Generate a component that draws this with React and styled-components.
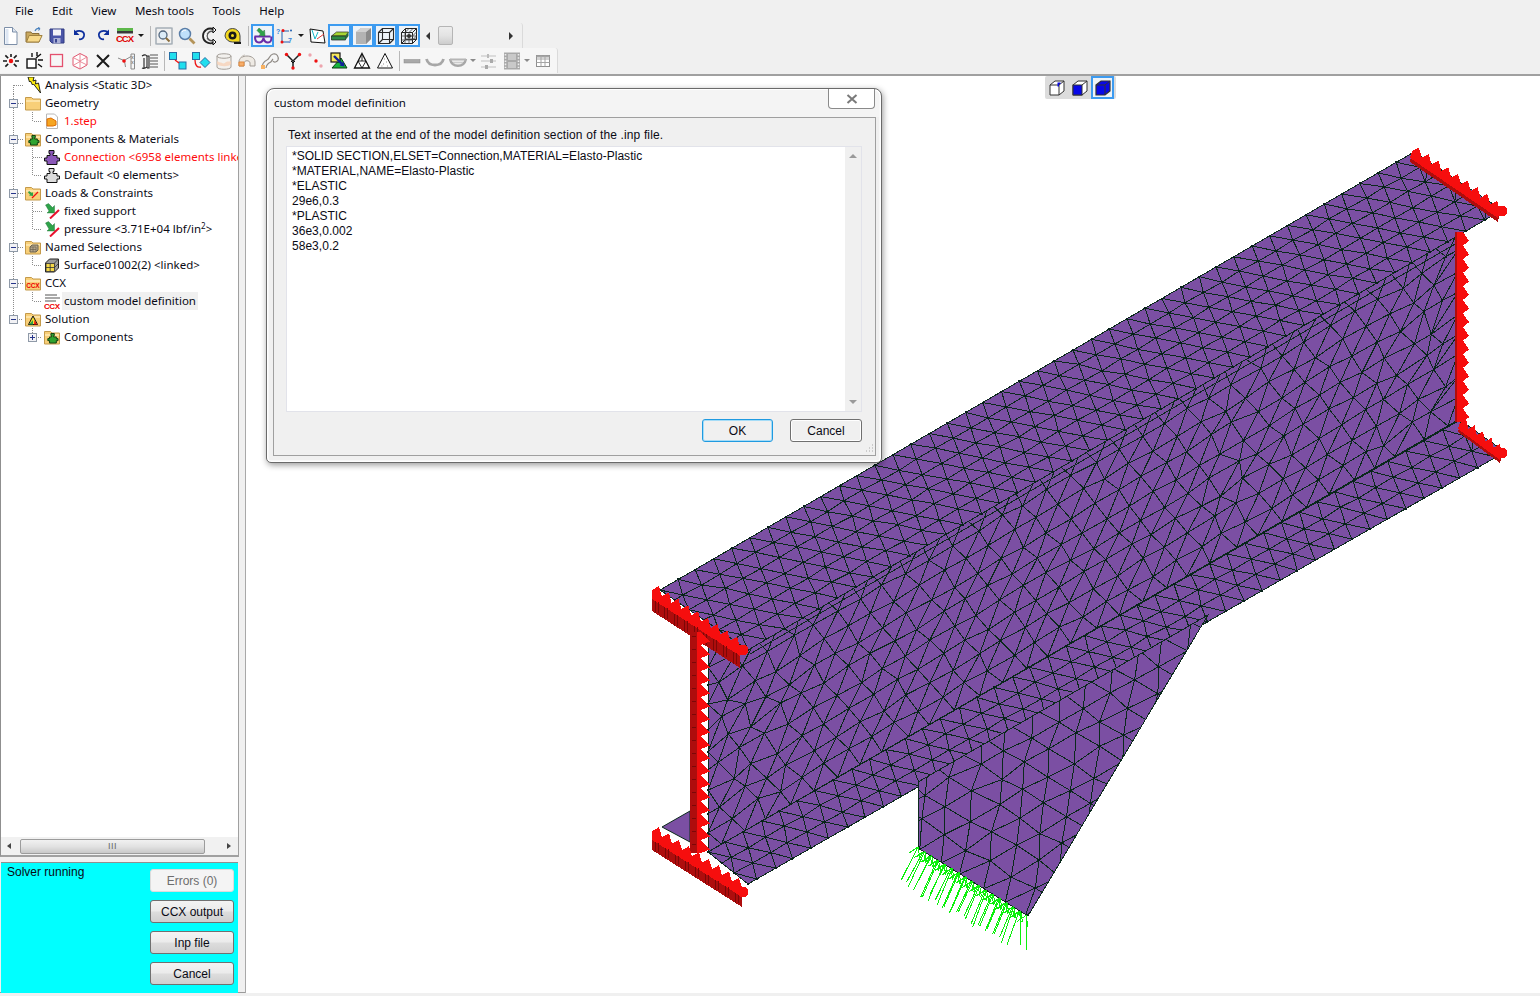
import React, { useMemo } from "react";
import styled, { createGlobalStyle } from "styled-components";

const Global = createGlobalStyle`
  html, body { margin: 0; padding: 0; background: #f0f0f0; overflow: hidden; }
  #root { height: 996px; }
`;
const UI = `"Noto Sans", "Open Sans", sans-serif`;
const ARIAL = `"Liberation Sans", Arial, sans-serif`;

/* ---------- layout ---------- */
const Page = styled.div`
  width: 1540px; height: 996px; display: flex; flex-direction: column;
  background: #f0f0f0; overflow: hidden; font-family: ${UI}; color: #000;
`;
const MenuBar = styled.nav`
  height: 23px; flex: none; display: flex; align-items: center; gap: 18.6px;
  padding: 0 0 3px 15px; box-sizing: border-box; font-size: 11.5px;
`;
const MenuItem = styled.span`color: #0a0a14;`;
const ToolRow = styled.div`
  height: ${p => p.$h || 25}px; flex: none; display: flex; align-items: flex-start;
`;
const ToolStrip = styled.div`
  display: flex; align-items: center; height: 25px; margin-left: -1px;
  width: ${p => p.$width}px; flex: none; box-sizing: border-box;
  background: ${p => p.$bg};
  border-right: 1px solid #dadada;
  border-top-right-radius: 3px;
`;
const ToolButton = styled.div`
  width: 23px; height: 23px; flex: none; display: flex; align-items: center; justify-content: center;
  box-sizing: border-box;
  border: ${p => (p.$on ? "2px solid #3d9bf0" : "none")};
  background: ${p => (p.$on ? "#eef3f8" : "transparent")};
`;
const Sep = styled.div`
  width: 1px; height: 20px; flex: none; background: #b8b8b8;
  margin-left: ${p => p.$l}px; margin-right: ${p => p.$r}px;
`;
const Caret = styled.div`
  width: 8px; flex: none; display: flex; justify-content: center;
  &::after {
    content: ""; border-left: 3px solid transparent; border-right: 3px solid transparent;
    border-top: 3px solid ${p => (p.$dim ? "#8a8a8a" : "#1a1a1a")};
  }
`;
const Scroller = styled.div`
  display: flex; align-items: center; width: 101px; height: 23px; flex: none; position: relative;
`;
const ArrowL = styled.div`
  width: 0; height: 0; margin-left: 6px; flex: none;
  border-top: 4px solid transparent; border-bottom: 4px solid transparent; border-right: 4px solid #333;
`;
const ArrowR = styled.div`
  width: 0; height: 0; margin-left: auto; margin-right: 8px; flex: none;
  border-top: 4px solid transparent; border-bottom: 4px solid transparent; border-left: 4px solid #333;
`;
const Thumb = styled.div`
  width: 15px; height: 19px; margin-left: 8px; flex: none; box-sizing: border-box;
  border: 1px solid #b5b5b5; border-radius: 2px;
  background: linear-gradient(#ededed, #e3e3e3 50%, #cdcdcd);
`;
const Main = styled.div`
  flex: 1; display: flex; border-top: 2px solid #a0a0a0; min-height: 0;
  border-bottom: 3px solid #f0f0f0; box-shadow: inset 0 -1px 0 #9a9a9a;
`;
const LeftPane = styled.aside`
  width: 239px; flex: none; display: flex; flex-direction: column;
`;
const TreeFrame = styled.div`
  height: 781px; flex: none; display: flex; flex-direction: column; box-sizing: border-box;
  border-left: 1.5px solid #8f8f8f; border-right: 1px solid #a0a0a0; border-bottom: 2px solid #a0a0a0;
`;
const Tree = styled.div`
  flex: 1; background: #fff; overflow: hidden; padding: 0 0 0 3px; min-height: 0;
`;
const Row = styled.div`
  height: 18px; display: flex; align-items: center; white-space: nowrap;
`;
const Guide = styled.svg`width: 19px; height: 18px; flex: none; display: block;`;
const RowIcon = styled.svg`width: 16px; height: 16px; flex: none; margin: 0 2px; display: block;`;
const Label = styled.span`
  font-size: 11.5px; line-height: 17px; padding: 0 2px 1px; flex: none;
  color: ${p => (p.$red ? "#fe0a0a" : "#0a0a14")};
  background: ${p => (p.$sel ? "#f0f0f0" : "transparent")};
`;
const HScroll = styled.div`
  height: 18px; flex: none; background: #f1f1f1; display: flex; align-items: center;
`;
const HThumb = styled.div`
  width: 185px; height: 15px; margin-left: 9px; box-sizing: border-box;
  border: 1px solid #9c9c9c; border-radius: 2px; display: flex; align-items: center; justify-content: center;
  background: linear-gradient(#f1f1f1, #e2e2e2 50%, #c8c8c8);
  color: #666; font: 9px ${ARIAL}; letter-spacing: .5px;
`;
const HArrowL = styled(ArrowL)`
  margin-left: 6px; border-top-width: 3.5px; border-bottom-width: 3.5px; border-right-color: #444;
`;
const HArrowR = styled(ArrowR)`
  margin-right: 7px; border-top-width: 3.5px; border-bottom-width: 3.5px; border-left-color: #444;
`;
const Status = styled.div`
  margin: 5px 1px 0 1px; flex: 1; background: #00ffff; box-sizing: border-box;
  border-top: 1px solid #8f8f8f; position: relative;
  display: flex; justify-content: space-between; padding: 3px 4px 0 6px; font: 12px ${ARIAL};
`;
const StatusText = styled.span`color: #0a0a14; line-height: 14px; margin-top: -1px;`;
const StatusButtons = styled.div`
  display: flex; flex-direction: column; gap: 8px; padding-top: 3px;
`;
const WinButton = styled.div`
  width: ${p => p.$w}px; height: 23px; box-sizing: border-box; display: flex; align-items: center; justify-content: center;
  font: 12px ${ARIAL}; border-radius: 3px;
  color: ${p => (p.$off ? "#6d6d6d" : "#0a0a14")};
  border: 1px solid ${p => (p.$off ? "#dcdcdc" : p.$def ? "#1f9ae0" : "#707070")};
  background: ${p => (p.$off ? "#f4f4f4" : "linear-gradient(#f3f3f3, #ebebeb 48%, #dddddd 52%, #cfcfcf)")};
  ${p => p.$flat && `background: #f0f0f0; box-shadow: inset 0 0 0 1px ${p.$def ? "#a5dcf7" : "#fff"};`}
`;
const Canvas = styled.main`
  flex: 1; position: relative; background: #fff; border-left: 1.5px solid #a8a8a8; margin-left: 6px;
  min-width: 0;
`;
const Viewport = styled.svg`display: block; width: 100%; height: 100%;`;
const CubeBar = styled.div`
  position: absolute; left: 799px; top: 0; height: 23px; width: 71px; display: flex;
  align-items: center; background: #dcdcdc; border-radius: 2px;
`;
const Dialog = styled.section`
  position: absolute; left: 20px; top: 12px; width: 616px; height: 375px; box-sizing: border-box;
  background: #f0f0f0; border: 1.5px solid #6a6a6a; border-radius: 8px 8px 5px 5px;
  box-shadow: 0 0 0 1.5px #fff inset, 1px 2px 6px rgba(0,0,0,.4);
  display: flex; flex-direction: column; padding: 0 5px 6px 6px;
`;
const Title = styled.header`
  height: 27px; flex: none; display: flex; align-items: center; justify-content: space-between;
  background: #f4f4f4; margin: 1px -3px 0 -4px; padding: 0 0 0 4px; border-top-left-radius: 6px; border-top-right-radius: 6px;
`;
const TitleText = styled.h1`
  margin: -2px 0 0 1px; font: 400 11.5px ${UI}; color: #0a0a14;
`;
const CloseBtn = styled.div`
  width: 47px; height: 20px; align-self: flex-start; margin-right: 4px; box-sizing: border-box; background: #fff;
  border: 1px solid #8a8a8a; border-top: none; border-radius: 0 0 4px 4px; margin-top: -1px;
  display: flex; align-items: center; justify-content: center;
`;
const Body = styled.div`
  flex: 1; border: 1px solid #9f9f9f; background: #f0f0f0; padding: 9px 13px 0 12px; display: flex; flex-direction: column; position: relative;
`;
const Prompt = styled.p`margin: 1px 0 -1px 2px; font: 12px/15px ${ARIAL}; color: #0a0a14; letter-spacing: .14px;`;
const TextArea = styled.div`
  margin-top: 4px; height: 266px; background: #fff; border: 1px solid #e2e3ea; display: flex; box-sizing: border-box;
`;
const Code = styled.pre`
  flex: 1; margin: 0; padding: 2px 5px; font: 12px/15px ${ARIAL}; color: #0a0a14; letter-spacing: .03px;
`;
const VScroll = styled.div`
  width: 16px; flex: none; background: #f0f0f0; display: flex; flex-direction: column; justify-content: space-between; align-items: center; padding: 7px 0;
`;
const UpMark = styled.div`
  border-left: 4px solid transparent; border-right: 4px solid transparent; border-bottom: 4px solid #9a9a9a;
`;
const DownMark = styled.div`
  border-left: 4px solid transparent; border-right: 4px solid transparent; border-top: 4px solid #9a9a9a;
`;
const DialogButtons = styled.div`
  display: flex; justify-content: flex-end; gap: 17px; margin-top: 7px;
`;
const Grip = styled.svg`position: absolute; right: 1px; bottom: 1px; width: 10px; height: 10px;`;

/* ---------- toolbar icons ---------- */
const Ico = styled.svg`width: 20px; height: 20px; display: block; flex: none;`;
const icons = {
  new: <><path d="M3.500 1.500h8l4.500 4.500v12.500H3.500z" fill="#fff" stroke="#7d8fa8"/><path d="M11.500 1.500v4.500H16" fill="#dfe7f2" stroke="#7d8fa8"/><path d="M4.500 3v15h3V3z" fill="#dde6f3"/></>,
  open: <><path d="M2 6h5l1 1.500h7V16H2z" fill="#c9a85e" stroke="#8b6f38"/><path d="M2.500 16l2.600-6.500h13L15 16z" fill="#f7d98a" stroke="#a0813f"/><path d="M11 5c1-2.400 3-3 5-2.500M16 2.500l-2-1M16 2.500l-1.500 2" fill="none" stroke="#4b82bd" strokeWidth="1.200"/></>,
  save: <><path d="M3 3h14v14H5l-2-2z" fill="#4a55a8" stroke="#2f3a80"/><rect x="6" y="3.500" width="8" height="6" fill="#f2f2f7"/><rect x="6.500" y="12" width="7" height="5" fill="#aab0d6"/><rect x="8" y="13" width="2" height="3.500" fill="#3a4590"/></>,
  undo: <><path d="M5 6c5-2.500 10-.5 9 4-.6 2.600-3 3.600-5 3.200" fill="none" stroke="#0d2f9e" strokeWidth="1.700"/><path d="M4 3.500v5.500h5.500z" fill="#0d2f9e"/></>,
  redo: <><path d="M15 6c-5-2.500-10-.5-9 4 .6 2.600 3 3.600 5 3.200" fill="none" stroke="#0d2f9e" strokeWidth="1.700"/><path d="M16 3.500v5.500h-5.500z" fill="#0d2f9e"/></>,
  ccx: <><rect x="1" y="2" width="16" height="3" fill="#5db84a"/><rect x="1" y="5" width="16" height="2.500" fill="#3a3a3a"/><text x="0" y="16" fontFamily={ARIAL} fontWeight="700" fontSize="9.500" fill="#e00000" textLength="18">CCX</text></>,
  zoombox: <><path d="M2 1.500v17M2.500 2h15M18 1.500v17M2.500 18h15" stroke="#7f8c99" fill="none"/><circle cx="9" cy="9" r="4" fill="#dcecf8" stroke="#51667e" strokeWidth="1.300"/><path d="M12 12l3.500 3.500" stroke="#8a6d3b" strokeWidth="2"/></>,
  zoom: <><circle cx="8" cy="8" r="5.500" fill="#bfe0fa" stroke="#5a7ea8" strokeWidth="1.500"/><path d="M5 6c1-1.500 2.500-2 4-1.800" stroke="#fff" fill="none"/><path d="M12.500 12.500l5 5" stroke="#b4945a" strokeWidth="2.800"/></>,
  rotate: <><path d="M14 3.500C8 .5 3 5 3 10c0 5 5 9 11 6.500" fill="none" stroke="#222" strokeWidth="1.800"/><path d="M14 6C10 4 7 7 7 10s3 6 7 4" fill="none" stroke="#555" strokeWidth="1.500"/><path d="M5 8l2 .5M5 12l2-.5M4 10h3" stroke="#fff" strokeWidth=".8"/><path d="M13 1l3 3-3 3zM13 13l3 3-3 3z" fill="#fff" stroke="#111"/></>,
  tape: <><path d="M2 10a7.500 7.500 0 1 1 15 0v6H9.500A7.500 7.500 0 0 1 2 10z" fill="#f4d91f" stroke="#444"/><circle cx="9.500" cy="9.500" r="4" fill="#1a1a1a"/><circle cx="9.500" cy="9.500" r="1.500" fill="#f4d91f"/><path d="M11 16h7v2h-7z" fill="#1a1a1a"/></>,
  glasses: <><path d="M1.500 10.500h16M2 10.500c0 4 1 6 4 6s4-2 4.500-4.500c.5 2.500 1.500 4.500 4.500 4.500s3.500-2 3.500-6" fill="none" stroke="#6a2da8" strokeWidth="2"/><path d="M6 2l4 3.500 1.500-1.500.5 6-6-.5 1.500-1.500L4 4.500z" fill="#2ea34a" stroke="#2a6e3b" strokeWidth=".5"/></>,
  pick: <><text x="0" y="8" fontFamily={ARIAL} fontWeight="700" fontSize="7" fill="#2f7ed8">?</text><text x="12" y="17" fontFamily={ARIAL} fontWeight="700" fontSize="7" fill="#2f7ed8">7</text><path d="M7 5h6M6 5v11M7 16h6" fill="none" stroke="#1f5fb0"/><circle cx="7" cy="4.500" r="1.500" fill="#e11"/><circle cx="6" cy="16" r="1.500" fill="#e11"/><circle cx="15" cy="4.500" r="1" fill="#1f5fb0"/></>,
  poly: <><path d="M3 3l13 2 2 12-14-1z" fill="#fff" stroke="#111"/><path d="M5 4l3 9 3-7" fill="none" stroke="#19b8c9"/><path d="M10 13l7-5" fill="none" stroke="#e03a3a"/></>,
  slab: <><path d="M1.500 10l5-4h12l-3 4z" fill="#a7d633" stroke="#2a2a2a" strokeWidth=".7"/><path d="M1.500 10h14v4h-14z" fill="#2e8b46" stroke="#1a1a1a" strokeWidth=".7"/><path d="M15.500 10l3-4v4l-3 4z" fill="#2a6b38"/></>,
  solid: <><path d="M3 6l5-4h10v11l-5 5H3z" fill="#b3b3b3"/><path d="M13 6l5-4v11l-5 5z" fill="#8b8b8b"/><path d="M3 6l5-4h10l-5 4z" fill="#d0d0d0"/></>,
  wire: <><path d="M2.500 6.500h11v11h-11zM6.500 2.500h11v11h-11zM2.500 6.500l4-4M13.500 6.500l4-4M13.500 17.500l4-4M2.500 17.500l4-4" fill="none" stroke="#2b2b2b" strokeWidth="1.100"/></>,
  mesh: <><path d="M2.500 6.500h11v11h-11zM6.500 2.500h11v11h-11zM2.500 6.500l4-4M13.500 6.500l4-4M13.500 17.500l4-4M2.500 17.500l4-4" fill="none" stroke="#222"/><path d="M2.500 10h11M2.500 14h11M6 6.500v11M10 6.500v11M13.500 10l4-4M13.500 14l4-4M6 6.500l4-4M10 6.500l4-4M6 10h11M6 13h11" fill="none" stroke="#444" strokeWidth=".8"/><circle cx="10" cy="10" r="2" fill="#333"/></>,
  burst: <><path d="M10 10L3 3M10 10L17 3M10 10L3 17M10 10L17 17M10 10H2M10 10H18M10 10V3" stroke="#1a1a1a" strokeWidth="1.600" strokeDasharray="4 3" strokeDashoffset="-4"/><circle cx="10" cy="10" r="2.200" fill="#e11"/></>,
  boxburst: <><rect x="3" y="8" width="9" height="9" fill="#fff" stroke="#111" strokeWidth="1.400"/><path d="M12 7l5-4M14 9h5M13 5V1M8 6V2M14 13l4 3" stroke="#111" strokeWidth="1.400"/></>,
  redrect: <rect x="3.500" y="3.500" width="12" height="12" fill="none" stroke="#e4506e" strokeWidth="1.300"/>,
  redcube: <><path d="M3 6.500l7-4 7 3.500v8l-7 4-7-3.500z" fill="#fff" stroke="#e0566f"/><path d="M3 6.500l7 3.500 7-4M10 10v7.500M3 14.500l7-4 7 3.500M10 2.500v8" fill="none" stroke="#e8808f" strokeWidth=".9"/></>,
  cross: <path d="M4 4l12 12M16 4L4 16" stroke="#1b1b1b" strokeWidth="2"/>,
  node: <><path d="M2 7l6 2.500 7-4M8.500 10l1 6M15 3v15M18.500 3v15M15 3h3.500M15 18h3.500" fill="none" stroke="#8a8a8a"/><circle cx="8" cy="10" r="1.800" fill="#e11"/><text x="15.200" y="8" fontSize="5" fill="#555" fontFamily={ARIAL}>x</text><text x="15.200" y="13" fontSize="5" fill="#555" fontFamily={ARIAL}>x</text></>,
  hatch: <><path d="M3 5c3-2 5-1 5 1v10c-2 1.500-4 1.500-5 1M5 7v10M8 5h2v12H8" fill="none" stroke="#222" strokeWidth="1.100"/><path d="M11 4h8M11 7h8M11 10h8M11 13h8M11 16h8" stroke="#555"/></>,
  seg: <><rect x="1.500" y="1.500" width="7" height="7" fill="#20dfee" stroke="#256fa5"/><rect x="11" y="11" width="7" height="7" fill="#20dfee" stroke="#256fa5"/><path d="M7 9l4 3" stroke="#e11" strokeWidth="1.300"/></>,
  seg2: <><rect x="1.500" y="1.500" width="7" height="7" fill="#20dfee" stroke="#256fa5"/><path d="M14 6.500l5 5-5 5-5-5z" fill="#20dfee" stroke="#256fa5"/><path d="M4 9c0 5 2 8 6 7" fill="none" stroke="#e11" strokeWidth="1.300"/></>,
  cyl: <><path d="M3 5c0-3 14-3 14 0v11c0 3-14 3-14 0z" fill="#f3f1ee" stroke="#a5a09a"/><path d="M3 5c0 3 14 3 14 0" fill="none" stroke="#a5a09a"/><path d="M3 10c3 2 4 1 5 2 2 1 3 0 4-1 2-1 3 0 5-1v3c-2 3-11 3-14 0z" fill="#f6d2b8" opacity=".8"/></>,
  arch: <><path d="M2 15V11c0-8 16-8 16 0v4h-5v-3c0-3-6-3-6 0v3z" fill="#eeeae4" stroke="#a09a94"/><path d="M2 11h5v4H2z" fill="#f6ae6c" stroke="#e08a3e"/><path d="M3 8c1-3 4-4 5-4" fill="none" stroke="#c8c2ba"/></>,
  scurve: <><path d="M2 17c0-5 3-7 5-8 3-1 2-5 6-6 4-1 6 3 5 6-1 2-4 3-5 1M6 17c0-3 2-4 3-5 3-1 3-3 4-4" fill="none" stroke="#8f8a85" strokeWidth="1.200"/><rect x="1" y="14" width="4" height="4" fill="#f9b262"/></>,
  ytree: <><path d="M3 3l7 7M17 3l-7 7M10 10v7" stroke="#222" strokeWidth="1.500"/><path d="M10 12l-2-2M10 12l2-2" stroke="#111"/><circle cx="3.500" cy="3.500" r="1.700" fill="#e11"/><circle cx="16.500" cy="3.500" r="1.700" fill="#e11"/><circle cx="10" cy="17" r="1.700" fill="#e11"/></>,
  dots: <><circle cx="4" cy="4" r="1.700" fill="#eda5ae"/><circle cx="10" cy="10" r="1.700" fill="#e11"/><circle cx="15" cy="15" r="1.700" fill="#eda5ae"/></>,
  mapto: <><path d="M3 17l9-10 6 10z" fill="#16b43c" stroke="#0b3b12"/><rect x="2" y="2" width="9" height="9" fill="#f6e75a" stroke="#111" strokeWidth="1.200"/><path d="M5 5l9 9" stroke="#12209a" strokeWidth="2.400"/><path d="M15.500 15.500l-5-1 4-4z" fill="#12209a"/></>,
  tri: <><path d="M10 2.500L17.500 17h-15z" fill="#fff" stroke="#111" strokeWidth="1.300"/><path d="M6 10h8M10 3v7M6 10l4 7 4-7" fill="none" stroke="#111" strokeWidth=".9"/></>,
  tridot: <><path d="M10 2.500L17.500 17h-15z" fill="#fff" stroke="#111"/><path d="M9 8h.8M11 11h.8M8 13h.8M12 15h.8M6.500 15h.8" stroke="#777"/></>,
  bar: <rect x="2" y="8.500" width="16" height="3.500" fill="#a9a9a9" stroke="#8a8a8a" strokeWidth=".5"/>,
  bowl: <path d="M1.500 8c2 8 15 8 17 0" fill="none" stroke="#a7a7a7" strokeWidth="2.800"/>,
  bowl2: <><path d="M2 8c2 9 14 9 16 0" fill="none" stroke="#a7a7a7" strokeWidth="2.400"/><path d="M2 7.500h16v2H2z" fill="#b5b5b5"/><path d="M5 11.500h10" stroke="#ccc" strokeWidth="1.600"/></>,
  sliders: <><path d="M2 5h15M2 10h15M2 16h15" stroke="#c0c0c0"/><rect x="8" y="3" width="2" height="4" fill="#bbb"/><rect x="11" y="8" width="3" height="4" fill="#aaa"/><rect x="6" y="14" width="3" height="4" fill="#aaa"/></>,
  film: <><rect x="2" y="1.500" width="16" height="17" fill="#a9a9a9"/><rect x="6" y="3" width="8" height="6" fill="#c9c9c9"/><rect x="6" y="11" width="8" height="6" fill="#c9c9c9"/><path d="M3.500 3v14M16.500 3v14" stroke="#eee" strokeWidth="1.600" strokeDasharray="1.600 1.600"/></>,
  table: <><rect x="3.500" y="4.500" width="13" height="11" fill="#fff" stroke="#8f8f8f"/><path d="M3.500 8h13M3.500 11.500h13M8 4.500v11M12 4.500v11" stroke="#a5a5a5"/><rect x="3.500" y="4.500" width="13" height="2" fill="#a5a5a5"/></>,
};
const cubeIcons = {
  a: <><path d="M3 7l5-4h9v10l-5 4H3z" fill="#fff" stroke="#333"/><path d="M3 7h9v10M12 7l5-4" fill="none" stroke="#333"/><path d="M10.500 4.500h3v1.500h-1.500v2.500h-1.500z" fill="#0a0ae0"/></>,
  b: <><path d="M3 7l5-4h9v10l-5 4H3z" fill="#fff" stroke="#333"/><rect x="3" y="7" width="9" height="10" fill="#0808e8" stroke="#333"/><path d="M12 7l5-4" stroke="#333"/></>,
  c: <><path d="M3 7l5-4h9v10l-5 4H3z" fill="#0808e8" stroke="#333" strokeWidth="1.200"/><path d="M3 7h9v10M12 7l5-4" fill="none" stroke="#333"/></>,
};

const row1a = ["new", "open", "save", "undo", "redo", "ccx"];
const row1b = ["zoombox", "zoom", "rotate", "tape"];
const row2a = ["burst", "boxburst", "redrect", "redcube", "cross", "node", "hatch"];
const row2b = ["seg", "seg2", "cyl", "arch", "scurve", "ytree", "dots", "mapto", "tri", "tridot"];

const Tool = ({ n, on }) => (
  <ToolButton $on={on}><Ico viewBox="0 0 20 20">{icons[n]}</Ico></ToolButton>
);

/* ---------- tree icons ---------- */
const Folder = ({ children }) => (
  <>
    <path d="M.5 4V2.500h6L8 4h7.500v11H.5z" fill="#f8cf78" stroke="#c49a4a" />
    <path d="M1 5h14v2H1z" fill="#fde3a6" />
    {children}
  </>
);
const PUZZLE = "M5 1.500h5v3H9v2h4v2.500h2.500v3H13v3.500H3v-3.500H.5v-3H3V6.500h3v-2H5z";
const Puzzle = ({ fill }) => <path d={PUZZLE} fill={fill} stroke="#111" strokeLinejoin="round" />;
const SmallPuzzle = () => (
  <g transform="translate(3.500 3.500) scale(.68)"><path d={PUZZLE} fill="#2fa32f" stroke="#103c10" strokeWidth="1.400" /></g>
);
const treeIcons = {
  bolt: <path d="M3 0h6l-1 4 3-1-.5 4 3-1 2 10-7-9-1 1-2-4-1 1z" fill="#ffee10" stroke="#111" strokeWidth=".9" />,
  folder: <Folder />,
  step: <><path d="M2.500 1h8l3 3v11.500h-11z" fill="#fff" stroke="#b8b8b8" /><path d="M3 6l4-1 5 3v4l-3 1H3z" fill="#f5a623" stroke="#e06c00" /></>,
  compFolder: <Folder><SmallPuzzle /></Folder>,
  purple: <Puzzle fill="#8a58b8" />,
  gray: <Puzzle fill="#dcdcdc" />,
  loadFolder: <Folder><path d="M4 6l3 2 1-1v4l-4-.5 1-1-2-2z" fill="#2fa34a" /><path d="M7 13l6-6" stroke="#e11" strokeWidth="1.200" /></Folder>,
  load: <><path d="M1.500 2l3-1.500 4 4 2-2v7.500H3l2-2z" fill="#2fa34a" stroke="#1a6b2f" strokeWidth=".4" /><path d="M6 15.500l9-8.500" stroke="#e8112d" strokeWidth="2" /></>,
  namedFolder: <Folder><path d="M5 8l2-2h6v5l-2 2H5z" fill="#b5a68a" stroke="#6a6250" /><path d="M5 10.500h6M8 8v5M5 8h6v5" fill="none" stroke="#6a6250" strokeWidth=".7" /></Folder>,
  named: <><path d="M1.500 6l4-4h9v9l-4 4h-9z" fill="#9b9b9b" stroke="#222" /><rect x="2" y="6.500" width="8.500" height="8" fill="#f4d84a" stroke="#333" strokeWidth=".8" /><path d="M6.200 6.500v8M2 10.500h8.500M10.500 6l4-4M10.500 10.500l4-4" stroke="#333" strokeWidth=".8" /></>,
  ccxFolder: <Folder><text x="1.200" y="12.500" fontFamily={ARIAL} fontSize="6.500" fontWeight="700" fill="#e00" textLength="13.500">CCX</text></Folder>,
  custom: <><path d="M1 2h12M1 5h15M1 8h11" stroke="#8d8d8d" strokeWidth="1.500" /><text x="0" y="15.500" fontFamily={ARIAL} fontSize="8" fontWeight="700" fill="#e00" textLength="16">CCX</text></>,
  solFolder: <Folder><path d="M8 5l4.500 8.500h-9z" fill="#f6e030" stroke="#111" /><path d="M4 13.500h4V9z" fill="#2fa34a" /><path d="M9 13.500h3L9.500 9z" fill="#e11" /></Folder>,
};

const kinds = {
  top: <path d="M9.500 9h9M9.500 9v9" />,
  t: <path d="M9.500 0v18M9.500 9h9" />,
  v: <path d="M9.500 0v18" />,
  l: <path d="M9.500 0v9h9" />,
  blank: null,
};
const TreeGuide = ({ k }) => {
  const box = k === "minus" || k === "plus" || k === "minusL" || k === "plusL";
  const last = k === "minusL" || k === "plusL";
  return (
    <Guide viewBox="0 0 19 18">
      <g stroke="#8c8c8c" strokeDasharray="1 1" fill="none" shapeRendering="crispEdges">
        {box ? <path d={last ? "M9.500 0v9h9" : "M9.500 0v18M9.500 9h9"} /> : kinds[k]}
      </g>
      {box && (
        <g shapeRendering="crispEdges">
          <rect x="5.500" y="5.500" width="8" height="8" fill="#f2f2f5" stroke="#8f9aa8" />
          <path d={k.startsWith("plus") ? "M7 9.500h5M9.500 7v5" : "M7 9.500h5"} stroke="#26358a" />
        </g>
      )}
    </Guide>
  );
};
const SupText = styled.sup`font-size: 8px; line-height: 0; vertical-align: 4px;`;
const treeRows = [
  { g: ["top"], i: "bolt", t: "Analysis <Static 3D>" },
  { g: ["minus"], i: "folder", t: "Geometry" },
  { g: ["v", "l"], i: "step", t: "1.step", red: 1 },
  { g: ["minus"], i: "compFolder", t: "Components & Materials" },
  { g: ["v", "t"], i: "purple", t: "Connection <6958 elements linke", red: 1 },
  { g: ["v", "l"], i: "gray", t: "Default <0 elements>" },
  { g: ["minus"], i: "loadFolder", t: "Loads & Constraints" },
  { g: ["v", "t"], i: "load", t: "fixed support" },
  { g: ["v", "l"], i: "load", t: <>pressure &lt;3.71E+04 lbf/in<SupText>2</SupText>&gt;</> },
  { g: ["minus"], i: "namedFolder", t: "Named Selections" },
  { g: ["v", "l"], i: "named", t: "Surface01002(2) <linked>" },
  { g: ["minus"], i: "ccxFolder", t: "CCX" },
  { g: ["v", "l"], i: "custom", t: "custom model definition", sel: 1 },
  { g: ["minusL"], i: "solFolder", t: "Solution" },
  { g: ["blank", "plusL"], i: "compFolder", t: "Components" },
];

/* ---------- FEA mesh ---------- */
function rng(seed) {
  let a = seed >>> 0;
  return () => {
    a = (a + 0x6d2b79f5) >>> 0;
    let t = a;
    t = Math.imul(t ^ (t >>> 15), t | 1);
    t ^= t + Math.imul(t ^ (t >>> 7), t | 61);
    return ((t ^ (t >>> 14)) >>> 0) / 4294967296;
  };
}
const f1 = n => n.toFixed(1);
function patch([p00, p10, p11, p01], nu, nv, jitter, seed, endJitter) {
  const r = rng(seed);
  const at = (w, v) => [
    (1 - w) * (1 - v) * p00[0] + w * (1 - v) * p10[0] + w * v * p11[0] + (1 - w) * v * p01[0],
    (1 - w) * (1 - v) * p00[1] + w * (1 - v) * p10[1] + w * v * p11[1] + (1 - w) * v * p01[1],
  ];
  const du = 1 / nu, dv = 1 / nv;
  const rows = [];
  for (let j = 0; j <= nv; j++) {
    const us = [];
    if (j % 2 === 0) for (let i = 0; i <= nu; i++) us.push(i * du);
    else { us.push(0); for (let i = 0; i < nu; i++) us.push((i + 0.5) * du); us.push(1); }
    rows.push(us.map((u, i) => {
      const edgeU = i === 0 || i === us.length - 1;
      const edgeV = j === 0 || j === nv;
      const local = endJitter && (u < 0.12 || u > 0.9 || (u > 0.66 && u < 0.72)) ? endJitter : jitter;
      const ju = edgeU ? 0 : (r() - 0.5) * local * du;
      const jv = edgeV ? 0 : (r() - 0.5) * local * dv;
      const uu = u + ju;
      const xy = at(uu, j * dv + jv);
      return { u: uu, x: xy[0], y: xy[1] };
    }));
  }
  let d = "";
  const seg = (a, b) => { d += `M${f1(a.x)} ${f1(a.y)}L${f1(b.x)} ${f1(b.y)}`; };
  rows.forEach(row => row.forEach((p, i) => { if (i) seg(row[i - 1], p); }));
  for (let j = 0; j < nv; j++) {
    const A = rows[j], B = rows[j + 1];
    let a = 0, b = 0;
    seg(A[0], B[0]);
    while (a < A.length - 1 || b < B.length - 1) {
      if (b >= B.length - 1 || (a < A.length - 1 && A[a + 1].u <= B[b + 1].u)) a++;
      else b++;
      seg(A[a], B[b]);
    }
  }
  return { d, nodes: rows.flat() };
}
const PURPLE = "#7b4fa3";
const LINE = "#0b2a1c";
const quads = {
  web: [[708, 625], [1458, 190], [1458, 420], [708, 852]],
  bottom: [[708, 852], [1460, 420], [1505, 452], [748, 884]],
  top: [[660, 590], [1414, 152], [1502, 210], [748, 650]],
  gussetLattice: [[874, 821], [1050, 930], [1260, 636], [1084, 527]],
};
const gussetOutline = [[918, 782], [1208, 615], [1028, 916], [918, 848]];
const poly = q => q.map(p => p.join(",")).join(" ");
const Mesh = ({ q, nu, nv, jit, seed, endJit, clip }) => {
  const m = useMemo(() => patch(q, nu, nv, jit, seed, endJit), []);
  const id = `clip${seed}`;
  return (
    <g shapeRendering="crispEdges">
      {clip && <clipPath id={id}><polygon points={poly(clip)} /></clipPath>}
      <polygon points={poly(clip || q)} fill={PURPLE} stroke={LINE} strokeWidth="1" />
      <g clipPath={clip ? `url(#${id})` : undefined}>
        <path d={m.d} fill="none" stroke={LINE} strokeWidth="1" />
        <g fill="#07201a">
          {m.nodes.map((n, i) => <rect key={i} x={n.x - 1} y={n.y - 1} width="2" height="2" />)}
        </g>
      </g>
    </g>
  );
};
const redRuns = [
  { a: [652, 590], b: [740, 647], n: 9, dark: [0, 21], band: [0, 9], tooth: [2, -7] },
  { a: [701, 632], b: [701, 853], n: 17, dark: [-11, 0], band: [-4, 0], tooth: [9, 3], vert: 1 },
  { a: [652, 831], b: [742, 888], n: 9, dark: [0, 19], band: [0, 9], tooth: [2, -7] },
  { a: [1412, 151], b: [1500, 211], n: 9, dark: [-2, 11], band: [-2, 7], tooth: [2, -7] },
  { a: [1463, 232], b: [1463, 422], n: 14, dark: [-8, 0], band: [-6, 0], tooth: [6, 2], vert: 1 },
  { a: [1460, 423], b: [1502, 454], n: 5, dark: [-2, 9], band: [-2, 6], tooth: [2, -7] },
];
const Constraints = () => {
  const shapes = [];
  redRuns.forEach((run, ri) => {
    const { a, b, n, dark, band, tooth } = run;
    for (let i = 0; i < n; i++) {
      const t0 = i / n, t1 = (i + 1) / n;
      const p0 = [a[0] + (b[0] - a[0]) * t0, a[1] + (b[1] - a[1]) * t0];
      const p1 = [a[0] + (b[0] - a[0]) * t1, a[1] + (b[1] - a[1]) * t1];
      const mid = [(p0[0] + p1[0]) / 2 + tooth[0], (p0[1] + p1[1]) / 2 + tooth[1]];
      shapes.push(<polygon key={`${ri}d${i}`} fill="#ae0d0d" points={poly([p0, p1, [p1[0] + dark[0], p1[1] + dark[1]], [p0[0] + dark[0], p0[1] + dark[1]]])} />);
      shapes.push(<polygon key={`${ri}b${i}`} fill="#f60e0e" points={poly([p0, mid, p1, [p1[0] + band[0], p1[1] + band[1]], [p0[0] + band[0], p0[1] + band[1]]])} />);
      if (!run.vert && dark[1] > 12) {
        shapes.push(<path key={`${ri}s${i}`} d={`M${f1(p0[0] + 3)} ${f1(p0[1] + 11)}v${dark[1] - 9}m3 0v${-(dark[1] - 10)}`} stroke="#7d0707" fill="none" />);
      }
      if (run.vert && dark[0] < -9) {
        shapes.push(<path key={`${ri}v${i}`} d={`M${f1(p0[0] - 9)} ${f1(p0[1] + 4)}h4`} stroke="#7d0707" fill="none" />);
      }
    }
  });
  shapes.push(<circle key="c1" cx="743" cy="650" r="5.500" fill="#f60e0e" />);
  shapes.push(<circle key="c2" cx="743" cy="892" r="5.500" fill="#f60e0e" />);
  shapes.push(<circle key="c3" cx="1502" cy="211" r="5.500" fill="#f60e0e" />);
  shapes.push(<circle key="c4" cx="1502" cy="453" r="5.500" fill="#f60e0e" />);
  return <g shapeRendering="crispEdges">{shapes}</g>;
};
const Forces = () => {
  const d = useMemo(() => {
    const r = rng(77);
    let s = "";
    const N = 32;
    for (let i = 0; i < N; i++) {
      const t = i / (N - 1);
      const hx = 919 + t * 106 + (i % 2 ? 1 : -1);
      const hy = 848 + t * 66 + (i % 2 ? 1.500 : -1);
      const lean = (t > 0.95 ? 0 : -17 + t * 5);
      const len = 30 + r() * 8;
      const tx = hx + lean, ty = hy + len;
      s += `M${f1(hx)} ${f1(hy)}L${f1(tx)} ${f1(ty)}`;
      s += `M${f1(hx)} ${f1(hy)}L${f1(hx - 9)} ${f1(hy + 6)}M${f1(hx)} ${f1(hy)}L${f1(hx + 2)} ${f1(hy + 11)}`;
    }
    return s;
  }, []);
  return <path d={d} stroke="#0cf00c" strokeWidth="1" fill="none" shapeRendering="crispEdges" />;
};

/* ---------- app ---------- */
const code = `*SOLID SECTION,ELSET=Connection,MATERIAL=Elasto-Plastic
*MATERIAL,NAME=Elasto-Plastic
*ELASTIC
29e6,0.3
*PLASTIC
36e3,0.002
58e3,0.2`;

export default function App() {
  return (
    <Page>
      <Global />
      <MenuBar>
        {["File", "Edit", "View", "Mesh tools", "Tools", "Help"].map(m => <MenuItem key={m}>{m}</MenuItem>)}
      </MenuBar>
      <ToolRow>
        <ToolStrip $width={524} $bg="#f0f0f0">
          {row1a.map(n => <Tool key={n} n={n} />)}
          <Caret />
          <Sep $l={5} $r={1} />
          {row1b.map(n => <Tool key={n} n={n} />)}
          <Sep $l={4} $r={2} />
          <Tool n="glasses" on />
          <Tool n="pick" />
          <Caret />
          <Tool n="poly" />
          <Tool n="slab" on />
          <Tool n="solid" on />
          <Tool n="wire" on />
          <Tool n="mesh" on />
          <Scroller><ArrowL /><Thumb /><ArrowR /></Scroller>
        </ToolStrip>
      </ToolRow>
      <ToolRow $h={26}>
        <ToolStrip $width={559} $bg="#f6f6f6">
          {row2a.map(n => <Tool key={n} n={n} />)}
          <Sep $l={4} $r={1} />
          {row2b.map(n => <Tool key={n} n={n} />)}
          <Sep $l={3} $r={0} />
          <Tool n="bar" />
          <Tool n="bowl" />
          <Tool n="bowl2" />
          <Caret $dim />
          <Tool n="sliders" />
          <Tool n="film" />
          <Caret $dim />
          <Tool n="table" />
        </ToolStrip>
      </ToolRow>
      <Main>
        <LeftPane>
          <TreeFrame>
            <Tree>
              {treeRows.map((r, i) => (
                <Row key={i}>
                  {r.g.map((k, j) => <TreeGuide key={j} k={k} />)}
                  <RowIcon viewBox="0 0 16 16">{treeIcons[r.i]}</RowIcon>
                  <Label $red={r.red} $sel={r.sel}>{r.t}</Label>
                </Row>
              ))}
            </Tree>
            <HScroll>
              <HArrowL />
              <HThumb>III</HThumb>
              <HArrowR />
            </HScroll>
          </TreeFrame>
          <Status>
            <StatusText>Solver running</StatusText>
            <StatusButtons>
              <WinButton $w={84} $off>Errors (0)</WinButton>
              <WinButton $w={84}>CCX output</WinButton>
              <WinButton $w={84}>Inp file</WinButton>
              <WinButton $w={84}>Cancel</WinButton>
            </StatusButtons>
          </Status>
        </LeftPane>
        <Canvas>
          <Viewport viewBox="246 76 1294 917" preserveAspectRatio="xMinYMin meet">
            <polygon points="662,827 690,811 690,842" fill={PURPLE} stroke={LINE} />
            <Mesh q={quads.web} nu={32} nv={11} jit={0.2} seed={11} endJit={0.4} />
            <Mesh q={quads.bottom} nu={42} nv={3} jit={0.1} seed={23} />
            <Mesh q={quads.gussetLattice} nu={8} nv={14} jit={0.25} seed={31} clip={gussetOutline} />
            <Mesh q={quads.top} nu={42} nv={6} jit={0.1} seed={47} />
            <path d="M750 654L1462 240" stroke={LINE} strokeWidth="1" fill="none" shapeRendering="crispEdges" />
            <Constraints />
            <Forces />
          </Viewport>
          <CubeBar>
            <ToolButton><Ico viewBox="0 0 20 20">{cubeIcons.a}</Ico></ToolButton>
            <ToolButton><Ico viewBox="0 0 20 20">{cubeIcons.b}</Ico></ToolButton>
            <ToolButton $on><Ico viewBox="0 0 20 20">{cubeIcons.c}</Ico></ToolButton>
          </CubeBar>
          <Dialog>
            <Title>
              <TitleText>custom model definition</TitleText>
              <CloseBtn>
                <svg width="12" height="10" viewBox="0 0 12 10"><path d="M1.500 1l9 8M10.500 1l-9 8" stroke="#7a7a7a" strokeWidth="2" fill="none" /></svg>
              </CloseBtn>
            </Title>
            <Body>
              <Prompt>Text inserted at the end of the model definition section of the .inp file.</Prompt>
              <TextArea>
                <Code>{code}</Code>
                <VScroll><UpMark /><DownMark /></VScroll>
              </TextArea>
              <DialogButtons>
                <WinButton $w={71} $def $flat>OK</WinButton>
                <WinButton $w={72} $flat>Cancel</WinButton>
              </DialogButtons>
              <Grip viewBox="0 0 10 10">
                <path d="M8 1h1M5 4h1M8 4h1M2 7h1M5 7h1M8 7h1" stroke="#a8a8a8" />
              </Grip>
            </Body>
          </Dialog>
        </Canvas>
      </Main>
    </Page>
  );
}
